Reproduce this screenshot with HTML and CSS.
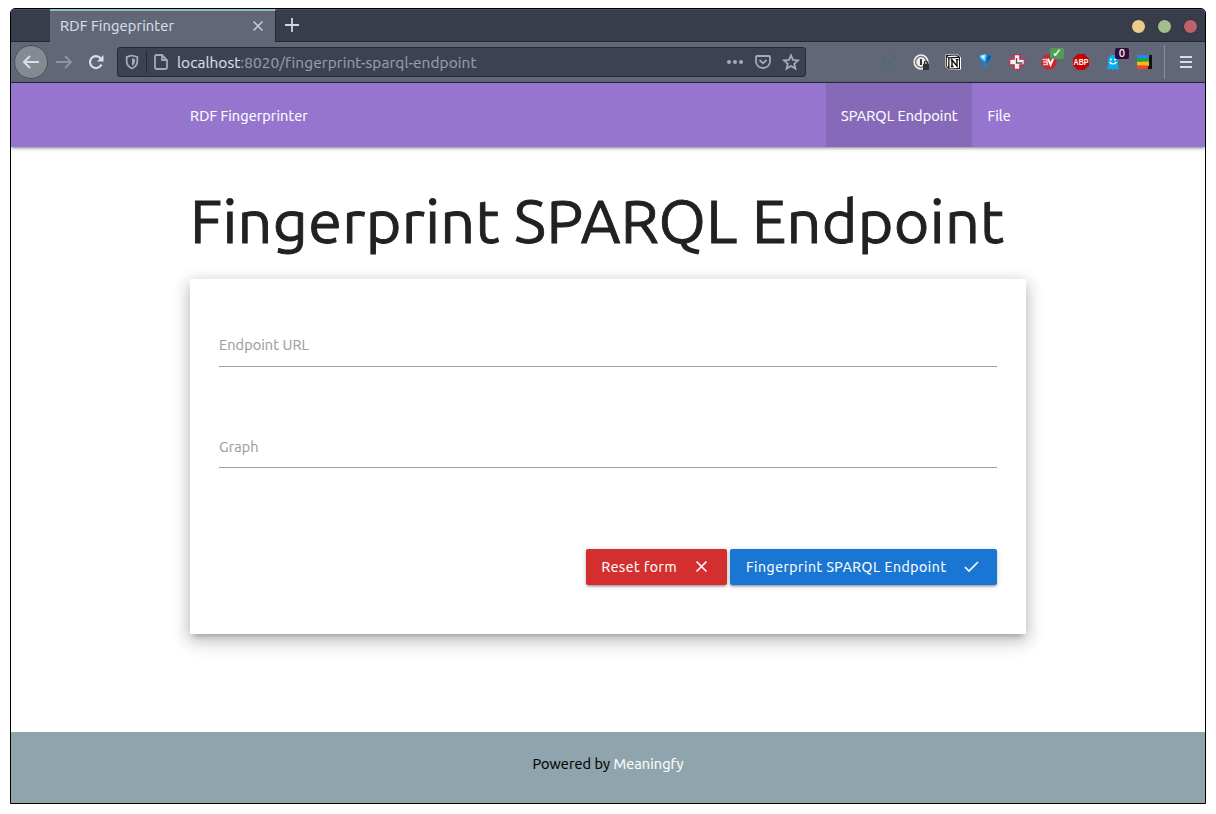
FILE: index.html
```html
<!DOCTYPE html>
<html lang="en">
<head>
<meta charset="utf-8">
<title>RDF Fingeprinter</title>
<link rel="stylesheet" href="styles.css">
</head>
<body>
<div class="window">
  <div class="tabbar">
    <div class="tab"><span class="tab-title">RDF Fingeprinter</span>
      <svg class="tab-close" width="12" height="12" viewBox="0 0 12 12"><path d="M1.500 1.500l9 9M10.500 1.500l-9 9"/></svg>
    </div>
    <svg class="tab-new" width="16" height="16" viewBox="0 0 16 16"><path d="M8 1v14M1 8h14"/></svg>
    <div class="controls"><i class="dot yellow"></i><i class="dot green"></i><i class="dot red"></i></div>
  </div>
  <div class="toolbar">
    <div class="back"><svg width="18" height="16" viewBox="0 0 18 16"><path d="M17 8H2M8 2L2 8l6 6"/></svg></div>
    <svg class="forward" width="18" height="16" viewBox="0 0 18 16"><path d="M1 8h15M10 2l6 6-6 6"/></svg>
    <svg class="reload" width="16" height="16" viewBox="0 0 16 16"><path class="line" d="M12.600 4.200A6 6 0 1 0 13.500 10.500"/><path class="solid" d="M15.500 1v6.500H9z"/></svg>
    <div class="url">
      <svg class="shield" width="14" height="16" viewBox="0 0 14 16"><path class="line" d="M7 1.500L12.300 3v4.500c0 3.200-2.300 5.600-5.300 7C4 13.100 1.700 10.700 1.700 7.500V3z"/><path class="solid" d="M7 4.200l3 .8v2.800c0 1.700-1.200 3-3 4z"/></svg>
      <span class="url-sep"></span>
      <svg class="page-icon" width="14" height="16" viewBox="0 0 14 16"><path class="line" d="M2.500 1H8l5 5v7.500A1.500 1.500 0 0 1 11.500 15h-9A1.500 1.500 0 0 1 1 13.500v-11A1.500 1.500 0 0 1 2.500 1zM8 1v5h5"/></svg>
      <span class="address"><b>localhost</b>:8020/fingerprint-sparql-endpoint</span>
      <svg class="more" width="17" height="16" viewBox="0 0 17 16"><circle cx="3" cy="8" r="2"/><circle cx="9" cy="8" r="2"/><circle cx="15" cy="8" r="2"/></svg>
      <svg class="pocket" width="16" height="16" viewBox="0 0 16 16"><path class="line" d="M2 2h12a1 1 0 0 1 1 1v4.500a7 6.500 0 0 1-14 0V3a1 1 0 0 1 1-1zM4.500 6L8 9.300 11.500 6"/></svg>
      <svg class="star" width="16" height="16" viewBox="0 0 16 16"><path class="line" d="M8 1.300l2 4.600 5 .5-3.800 3.300 1.200 4.900L8 12l-4.400 2.600 1.200-4.900L1 6.400l5-.5z"/></svg>
    </div>
    <div class="extensions">
      <svg width="18" height="18" viewBox="0 0 18 18"><path d="M13.500 3.200A6.700 6.700 0 1 0 13.500 14.800M15.500 4L10 9l5.500 5" fill="none" stroke="#506b75" stroke-width="2.200"/><circle cx="9" cy="9" r="1.800" fill="#506b75"/></svg>
      <svg width="18" height="18" viewBox="0 0 18 18"><circle cx="9" cy="9" r="6.900" fill="#777" stroke="#eee" stroke-width="1.500"/><circle cx="9" cy="9" r="4.700" fill="#eee"/><path d="M9 6v6" stroke="#333" stroke-width="2"/><path d="M11 11h6v6h-6z" fill="#333"/><path d="M12.400 11V9.800a1.600 1.600 0 0 1 3.200 0V11" fill="none" stroke="#333" stroke-width="1.200"/></svg>
      <svg width="18" height="18" viewBox="0 0 18 18"><path d="M1.500 1.500L13 1l4 3.500v12L5 17l-3.500-3.500z" fill="#fff"/><path d="M2 2l10.500-.5L16 4v12L5 16.500 2 13z" fill="#111"/><path d="M3 3l9-.5 2 1.300-9 .5zM2.800 4l1.400 1.300v9l-1.400-1.600z" fill="#fff"/><path d="M5.500 5.500l9.500-.5v10l-9.500.5z" fill="#fff"/><path d="M6.800 13.500h2.800M8 13.500V7l5 6V6.500M6.800 7h2M11.800 6.600h2.700" fill="none" stroke="#111" stroke-width="1.400"/></svg>
      <svg width="18" height="18" viewBox="0 0 18 18"><path d="M3.500 2Q9 0 14.500 2 16.300 3.500 14.500 6L11 10v3.500L9 15l-1.500-1.500V10L3.500 6Q1.700 3.500 3.500 2z" fill="#1583da"/><path d="M4 2.500q4-1.500 6-1L9 8.500 4.500 5z" fill="#8bd3fb"/><path d="M5.500 3l3-.5-.3 3z" fill="#fff"/><path d="M12.500 2l2.500 1-1 3-4 4z" fill="#06569d"/></svg>
      <svg width="18" height="18" viewBox="0 0 18 18"><path d="M6.200 1.700h5.600v4.500h4.500v5.600h-4.500v4.500H6.200v-4.500H1.700V6.200h4.500z" fill="#f2f2f2" stroke="#d0284c" stroke-width="1.200"/><path d="M8.500 5v5h6" fill="none" stroke="#555" stroke-width="1.300"/></svg>
      <div class="ext"><svg width="18" height="18" viewBox="0 0 18 18"><circle cx="9" cy="9" r="7.600" fill="#c9252c"/><path d="M2.500 6.500h4.200l.8 5H3.200M3 9h4" fill="none" stroke="#f6caca" stroke-width="1.400"/><path d="M8 5.700l2.600 6 3.400-8" fill="none" stroke="#fff" stroke-width="2"/></svg><span class="badge ok">✓</span></div>
      <svg width="18" height="18" viewBox="0 0 18 18"><path d="M5.700 1h6.600L17 5.700v6.600L12.300 17H5.700L1 12.300V5.700z" fill="#c70000"/><text class="abp" x="9" y="12.300" text-anchor="middle" textLength="15" lengthAdjust="spacingAndGlyphs">ABP</text></svg>
      <div class="ext"><svg width="18" height="18" viewBox="0 0 18 18"><path d="M4 14V7a5 5 0 0 1 10 0v7l1.500 2-3 .5-1.500-1-2 1.500-2-1.500-1.500 1-3-.5z" fill="#0aaef0"/><circle cx="7" cy="6.500" r="1" fill="#fff"/><circle cx="11" cy="6.500" r="1" fill="#fff"/><path d="M5.500 9q3.500 4 7 0" fill="none" stroke="#fff" stroke-width="1.200"/></svg><span class="badge count">0</span></div>
      <svg width="18" height="18" viewBox="0 0 18 18"><path d="M12 2h4v14h-4z" fill="#111"/><path d="M1 2h12v3.500H1z" fill="#2386f4"/><path d="M1 5l12 .5V9L1 9.500z" fill="#1da83d"/><path d="M1 9l12-.5V13L1 12.500z" fill="#f8b916"/><path d="M1 12.500h11V16H1z" fill="#f04433"/></svg>
    </div>
    <span class="divider"></span>
    <svg class="menu" width="14" height="14" viewBox="0 0 14 14"><path d="M1 2h12M1 7h12M1 12h12"/></svg>
  </div>
  <nav class="nav">
    <div class="container nav-inner">
      <a class="brand">RDF Fingerprinter</a>
      <a class="nav-link active">SPARQL Endpoint</a>
      <a class="nav-link file">File</a>
    </div>
  </nav>
  <main class="container main">
    <h1>Fingerprint SPARQL Endpoint</h1>
    <form class="card">
      <div class="field"><label>Endpoint URL</label></div>
      <div class="field graph"><label>Graph</label></div>
      <div class="actions">
        <button type="button" class="btn reset"><span>Reset form</span><svg width="15" height="15" viewBox="0 0 15 15"><path d="M2.500 2.500l10 10M12.500 2.500l-10 10"/></svg></button>
        <button type="button" class="btn submit"><span>Fingerprint SPARQL Endpoint</span><svg width="15" height="15" viewBox="0 0 15 15"><path d="M1 8l4 4L14 3"/></svg></button>
      </div>
    </form>
  </main>
  <footer class="footer"><span>Powered by <a>Meaningfy</a></span></footer>
</div>
</body>
</html>
```
FILE: styles.css
```css
* { box-sizing: border-box; }
body { margin: 0; background: #fff; font-family: Ubuntu, "Noto Sans", sans-serif; font-size: 14.5px; letter-spacing: .08px; -webkit-text-stroke: .15px; }
svg { display: block; flex: none; overflow: visible; }
.window { width: 1196px; height: 796px; margin: 8px 0 0 10px; border: 1px solid #000; border-radius: 5px 5px 0 0; overflow: hidden; display: flex; flex-direction: column; }
.tabbar { height: 33px; flex: none; background: #373d4b; border-bottom: 1px solid #232733; border-top: 1px solid #4a505e; display: flex; padding-left: 39px; }
.tab { width: 226px; height: 33px; margin-top: -1px; background: #616776; border-top: 2px solid #8fbcbb; border-right: 1px solid #252934; color: #d8dee9; display: flex; align-items: center; justify-content: space-between; padding: 0 11px 2px 10px; }
.tab-title { white-space: nowrap; font-size: 14.667px; letter-spacing: .12px; }
.tab-close { stroke: #c8cdd8; stroke-width: 1.500; fill: none; }
.tab-new { margin: 7px 0 0 8px; stroke: #d0d5df; stroke-width: 1.800; fill: none; }
.controls { margin-left: auto; display: flex; gap: 11px; padding: 8.500px 7px 0 0; }
.dot { width: 15px; height: 15px; border-radius: 50%; border: 1px solid #292d38; }
.yellow { background: #ebcb8b; }
.green { background: #a3be8c; }
.red { background: #bf616a; }
.toolbar { height: 41px; flex: none; background: #616776; border-bottom: 1px solid #252934; display: flex; align-items: center; padding: 0 12px 0 3px; }
.back { width: 34px; height: 34px; border: 1px solid #4c505b; border-radius: 50%; background: #858992; display: flex; align-items: center; justify-content: center; }
.back svg, .forward { fill: none; stroke: #d8dee9; stroke-width: 2; }
.forward { stroke: #8d93a1; margin-left: 7px; }
.reload { margin-left: 15px; }
.line { fill: none; stroke: #a4aaba; stroke-width: 1.800; }
.solid { fill: #a4aaba; }
.reload .line { stroke: #d8dee9; stroke-width: 2.200; }
.reload .solid { fill: #d8dee9; }
.url { width: 689px; height: 30px; margin-left: 13px; border: 1px solid #252934; border-radius: 3px; background: #3d4252; display: flex; align-items: center; padding: 0 6px 0 7px; }
.url-sep { width: 1px; height: 22px; background: #252934; margin: 0 7px; }
.address { color: #989eac; margin: 1px auto 0 9px; white-space: nowrap; font-size: 15.400px; }
.address b { font-weight: inherit; color: #d8dee9; }
.more { fill: #a4aaba; margin-right: 12px; }
.pocket { margin-right: 12px; }
.extensions { display: flex; gap: 14px; margin-left: 74px; }
.ext { position: relative; width: 18px; }
.badge { position: absolute; left: 10px; top: -5px; height: 11px; width: 14px; border-radius: 2px; color: #fff; font: 10px/11px "DejaVu Sans", sans-serif; text-align: center; }
.ok { background: #4e9d58; font-size: 12px; }
.count { left: 11px; background: #330a3b; }
.abp { fill: #fff; font: bold 9px "Liberation Sans", sans-serif; }
.divider { width: 1px; height: 34px; background: #888d99; margin-left: auto; }
.menu { margin-left: 14px; fill: none; stroke: #d8dee9; stroke-width: 2; }
.container { width: 836px; margin: 0 auto; }
.nav { height: 64px; flex: none; background: #9575cd; color: #fff; position: relative; box-shadow: 0 2px 2px 0 rgba(0,0,0,.14), 0 3px 1px -2px rgba(0,0,0,.12), 0 1px 5px 0 rgba(0,0,0,.2); }
.nav-inner { height: 64px; display: flex; align-items: center; }
.brand { margin-right: auto; white-space: nowrap; }
.nav-link { height: 64px; display: flex; align-items: center; white-space: nowrap; padding-left: 15px; }
.active { width: 146px; background: #8669b8; }
.file { width: 54px; padding-left: 15.500px; }
.main { flex: 1; }
h1 { margin: 36px 0 0; height: 96px; font-size: 61px; line-height: 75px; font-weight: 400; letter-spacing: .34px; -webkit-text-stroke: .9px; color: #212121; white-space: nowrap; }
.card { height: 355px; padding: 43px 29px 49px; background: #fff; box-shadow: 0 8px 17px 2px rgba(0,0,0,.14), 0 3px 14px 2px rgba(0,0,0,.12), 0 5px 5px -3px rgba(0,0,0,.2); }
.field { height: 45px; border-bottom: 1px solid #9e9e9e; color: #9e9e9e; line-height: 46px; margin-bottom: 56px; }
.graph { line-height: 48px; }
.actions { display: flex; justify-content: flex-end; gap: 3px; padding-top: 25px; }
.btn { height: 36px; border: 0; border-radius: 2px; color: #fff; font: inherit; font-size: 14px; letter-spacing: .58px; padding: 0 18px 0 15.500px; display: flex; align-items: center; justify-content: space-between; white-space: nowrap; box-shadow: 0 2px 2px 0 rgba(0,0,0,.14), 0 3px 1px -2px rgba(0,0,0,.12), 0 1px 5px 0 rgba(0,0,0,.2); }
.btn svg { fill: none; stroke: #fff; stroke-width: 1.600; margin-top: -1px; }
.reset { width: 141px; background: #d32f2f; }
.submit { width: 267px; background: #1976d2; padding-left: 16px; }
.footer { height: 71px; flex: none; background: #90a4ae; color: #000; text-align: center; line-height: 64px; }
.footer a { color: #fff; }
```
